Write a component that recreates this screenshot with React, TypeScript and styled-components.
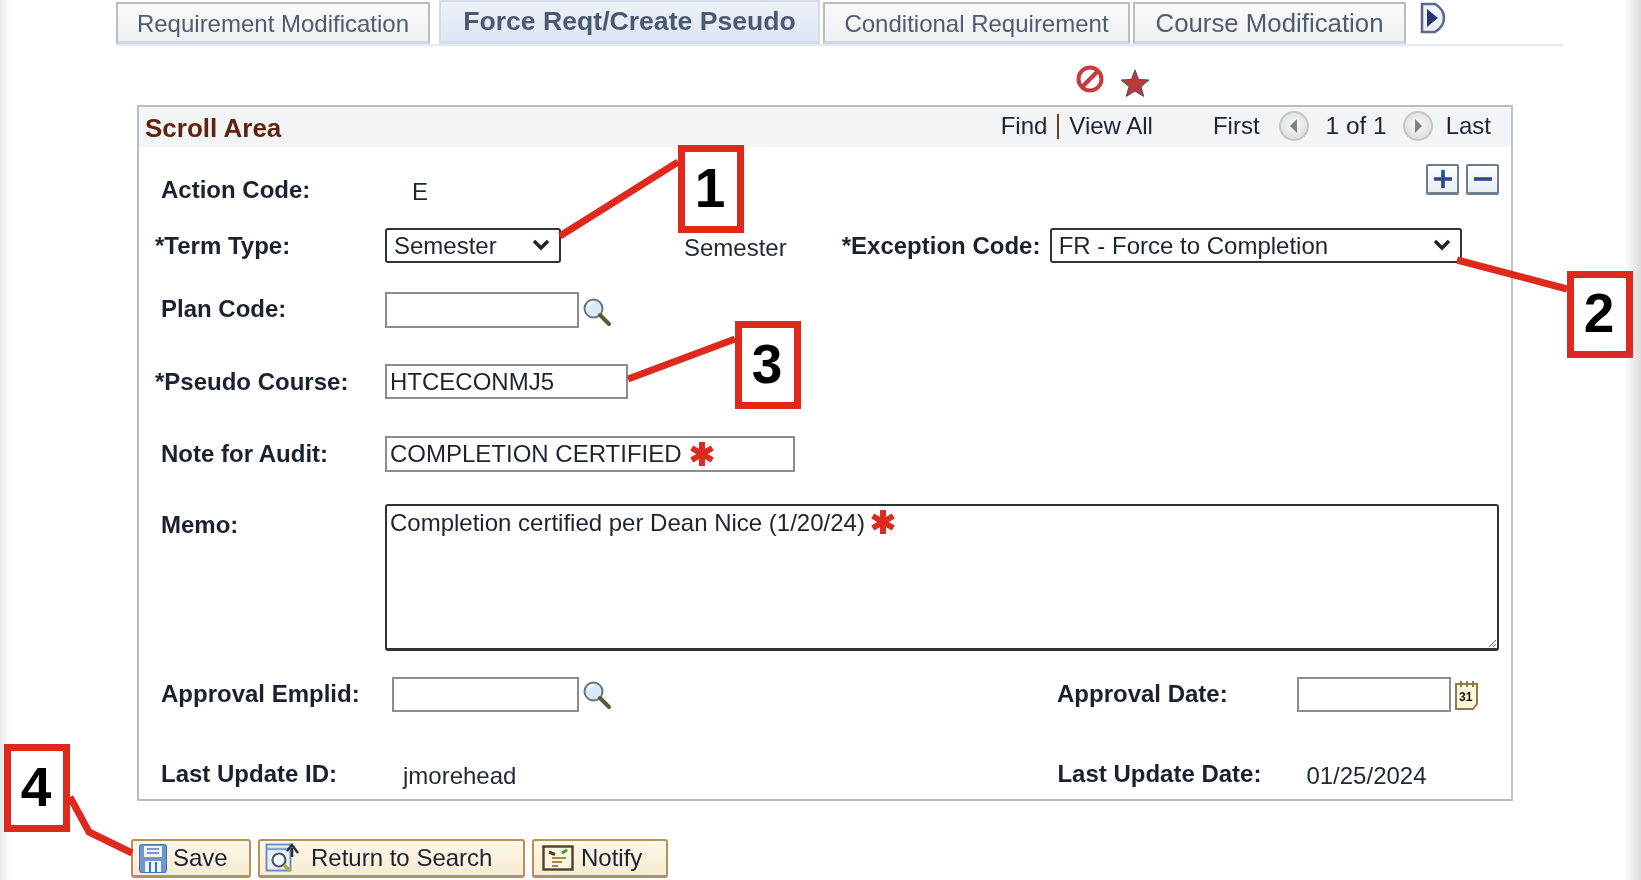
import React from "react";
import styled, { createGlobalStyle } from "styled-components";

const Global = createGlobalStyle`
  html, body { margin: 0; padding: 0; background: #fff; }
  body { font-family: "Liberation Sans", Arial, sans-serif; overflow: hidden; }
  * { box-sizing: border-box; }
`;

const Page = styled.div`
  position: relative;
  width: 1641px;
  height: 880px;
  overflow: hidden;
  padding-left: 137px;
  background: linear-gradient(90deg, #e9e9e9 0, #fff 11px, #fff 1624px, #dcdcdc 1641px);
`;

const Blurred = styled.div`
  filter: blur(0.6px);
`;

const TabBar = styled.div`
  display: flex;
  align-items: flex-start;
  height: 46px;
  width: 1447px;
  margin-left: -21px;
  border-bottom: 2px solid #e4e8f0;
`;

const Tab = styled.div<{ $active?: boolean; $w: number; $mr: number; $fs?: number }>`
  flex: none;
  width: ${(p) => p.$w}px;
  margin-right: ${(p) => p.$mr}px;
  height: ${(p) => (p.$active ? 44 : 42)}px;
  margin-top: ${(p) => (p.$active ? 0 : 2)}px;
  display: flex;
  align-items: center;
  justify-content: center;
  padding: ${(p) => (p.$active ? "0 0 1px" : "2px 0 0")};
  font-size: ${(p) => p.$fs ?? 24}px;
  font-weight: ${(p) => (p.$active ? 700 : 400)};
  color: ${(p) => (p.$active ? "#4b5a70" : "#4f5c6c")};
  border: 2px solid #b9bdc4;
  border-bottom: 3px solid #cfd6e4;
  ${(p) => (p.$active ? "border-color:#d3dcea;" : "")}
  background: ${(p) =>
    p.$active
      ? "linear-gradient(180deg,#eef2f8,#dde6f4)"
      : "linear-gradient(180deg,#fafafa,#eef0f3)"};
`;

const TabArrow = styled.div`
  margin: 2px 0 0 12px;
  height: 32px;
`;

const StatusIcons = styled.div`
  display: flex;
  align-items: flex-start;
  gap: 15px;
  height: 59px;
  padding: 18px 0 0 938px;
`;

const StarSlot = styled.span`
  display: flex;
  margin-top: 5px;
`;

const Panel = styled.section`
  width: 1376px;
  height: 696px;
  border: 2px solid #bcbcbc;
  border-right-color: #c4c4c4;
  background: #fff;
`;

const PanelHead = styled.header`
  display: flex;
  align-items: center;
  height: 40px;
  padding: 0 20px 2px 6px;
  background: #f2f5f5;
  font-size: 24px;
  color: #1c2333;
`;

const PanelTitle = styled.h2`
  margin: 4px auto 0 0;
  font-size: 26px;
  font-weight: 700;
  color: #5f2410;
`;

const Sep = styled.span`
  width: 2px;
  height: 25px;
  margin: 0 10px 0 10px;
  background: #7a3a28;
`;

const NavText = styled.span<{ $ml?: number; $fs?: number }>`
  margin-left: ${(p) => p.$ml ?? 0}px;
  font-size: ${(p) => p.$fs ?? 24}px;
`;

const NavBtn = styled.span<{ $ml: number; $mr: number }>`
  display: inline-flex;
  margin: 0 ${(p) => p.$mr}px 0 ${(p) => p.$ml}px;
`;

const Body = styled.div`
  padding-left: 16px;
`;

const Row = styled.div<{ $h: number; $mt: number; $start?: boolean }>`
  display: flex;
  align-items: ${(p) => (p.$start ? "flex-start" : "center")};
  height: ${(p) => p.$h}px;
  margin-top: ${(p) => p.$mt}px;
`;

const Label = styled.label<{ $req?: boolean; $w?: number; $ml?: number; $pt?: number; $pb?: number }>`
  flex: none;
  width: ${(p) => p.$w ?? 230}px;
  margin-left: ${(p) => p.$ml ?? 0}px;
  padding: ${(p) => p.$pt ?? 0}px 0 ${(p) => p.$pb ?? 0}px ${(p) => (p.$req ? 0 : 6)}px;
  font-size: 24px;
  font-weight: 700;
  color: #1a2230;
`;

const Value = styled.span<{ $ml?: number; $pt?: number }>`
  font-size: 24px;
  color: #1f2733;
  margin-left: ${(p) => p.$ml ?? 0}px;
  padding-top: ${(p) => p.$pt ?? 0}px;
`;

const Select = styled.select<{ $w: number }>`
  appearance: none;
  width: ${(p) => p.$w}px;
  height: 35px;
  padding: 0 30px 0 7px;
  font: 24px "Liberation Sans", Arial, sans-serif;
  color: #1c2430;
  background: #fff;
  border: 2px solid #333;
  border-radius: 3px;
`;

const Chevron = styled.svg`
  position: absolute;
  right: 11px;
  top: 10px;
  pointer-events: none;
`;

const Input = styled.input<{ $w: number; $h?: number }>`
  flex: none;
  width: ${(p) => p.$w}px;
  height: ${(p) => p.$h ?? 35}px;
  padding: 0 3px;
  font: 24px "Liberation Sans", Arial, sans-serif;
  color: #1c2430;
  background: #fff;
  border: 2px solid #8d8d8d;
  border-radius: 0;
  outline: none;
`;

const FieldWrap = styled.div`
  position: relative;
  flex: none;
  display: flex;
`;

const Asterisk = styled.span<{ $left: number; $top: number }>`
  position: absolute;
  left: ${(p) => p.$left}px;
  top: ${(p) => p.$top}px;
  display: flex;
`;

const TextArea = styled.textarea`
  width: 1114px;
  height: 147px;
  padding: 3px 3px;
  font: 24px/28px "Liberation Sans", Arial, sans-serif;
  color: #1c2430;
  background: #fff;
  border: 2px solid #333;
  border-bottom-width: 3px;
  border-radius: 3px;
  outline: none;
`;

const LookupIcon = styled.span<{ $mt?: number }>`
  display: inline-flex;
  margin: ${(p) => p.$mt ?? 4}px 0 0 3px;
`;

const RowButtons = styled.div`
  display: flex;
  gap: 7px;
  margin-left: auto;
  margin-right: 12px;
  align-self: flex-start;
`;

const SquareBtn = styled.span`
  display: flex;
  align-items: center;
  justify-content: center;
  width: 33px;
  height: 31px;
  background: linear-gradient(180deg, #fdfeff, #e7edf3);
  border: 2px solid #6e7f8b;
  border-bottom-width: 3px;
  border-radius: 2px;
`;

const Footer = styled.footer`
  display: flex;
  gap: 7px;
  margin: 38px 0 0 -6px;
`;

const ActionBtn = styled.button<{ $w: number; $pl: number; $gap: number }>`
  display: flex;
  align-items: center;
  gap: ${(p) => p.$gap}px;
  width: ${(p) => p.$w}px;
  height: 39px;
  padding: 0 0 0 ${(p) => p.$pl}px;
  font: 24px "Liberation Sans", Arial, sans-serif;
  color: #1a2230;
  background: linear-gradient(180deg, #fdf7ea, #f8ebd2);
  border: 2px solid #b59257;
  border-bottom-width: 3px;
  border-radius: 3px;
`;

const Overlay = styled.svg`
  position: absolute;
  inset: 0;
  width: 1641px;
  height: 880px;
  pointer-events: none;
`;

const Callout = styled.div<{ $x: number; $y: number; $w: number; $h: number }>`
  position: absolute;
  left: ${(p) => p.$x}px;
  top: ${(p) => p.$y}px;
  width: ${(p) => p.$w}px;
  height: ${(p) => p.$h}px;
  display: flex;
  align-items: center;
  justify-content: center;
  padding: 0 2px 3px 0;
  background: #fff;
  border: 7px solid #e0291d;
  font-size: 55px;
  font-weight: 700;
  color: #000;
  filter: blur(0.4px);
`;

const Magnifier = () => (
  <svg width="30" height="30" viewBox="0 0 30 30">
    <circle cx="11.5" cy="11.5" r="9" fill="#dbe9f6" stroke="#69747c" strokeWidth="2" />
    <path d="M6.5 10a5.5 5.5 0 0 1 5-4.5" fill="none" stroke="#fff" strokeWidth="2" />
    <path d="M18 18l9 9" stroke="#5c5a3a" strokeWidth="4" strokeLinecap="round" />
  </svg>
);

const CalendarIcon = () => (
  <svg width="26" height="30" viewBox="0 0 26 30">
    <path d="M2 4h21v20l-4 5H2z" fill="#fbf6dc" stroke="#8e7a45" strokeWidth="2" />
    <path d="M7 1v6M13 1v6M19 1v6" stroke="#8e7a45" strokeWidth="2" />
    <text x="5" y="21" fontFamily="Liberation Sans" fontWeight="700" fontSize="12" fill="#111">31</text>
  </svg>
);

const RoundNav = ({ dir }: { dir: "l" | "r" }) => (
  <svg width="32" height="32" viewBox="0 0 32 32">
    <defs>
      <radialGradient id={`nav${dir}`} cx="50%" cy="45%" r="60%">
        <stop offset="0" stopColor="#fdfdfd" />
        <stop offset="1" stopColor="#d8d8d8" />
      </radialGradient>
    </defs>
    <circle cx="16" cy="16" r="14" fill={`url(#nav${dir})`} stroke="#c6c6c6" strokeWidth="2" />
    <path d={dir === "l" ? "M19 9l-7 7 7 7z" : "M13 9l7 7-7 7z"} fill="#7d8285" />
  </svg>
);

const RedStar = () => (
  <svg width="26" height="26" viewBox="0 0 24 24">
    <path d="M12 1v22M2.5 6.5l19 11M21.5 6.5l-19 11" stroke="#dd2a20" strokeWidth="5.5" />
  </svg>
);

const ChevronIcon = () => (
  <Chevron width="18" height="13" viewBox="0 0 18 13">
    <path d="M2 3l7 7 7-7" fill="none" stroke="#222" strokeWidth="3.4" />
  </Chevron>
);

const SaveIcon = () => (
  <svg width="30" height="31" viewBox="0 0 30 31">
    <rect x="1.5" y="1.5" width="27" height="28" rx="2" fill="#6f96cf" stroke="#4a6fb0" />
    <rect x="6" y="3" width="18" height="11" fill="#eef4fb" />
    <path d="M9 6h12M9 10h12" stroke="#5279b8" strokeWidth="1.6" />
    <rect x="7" y="18" width="16" height="11" fill="#eef4fb" />
    <path d="M12 19v10M18 19v10" stroke="#4a6fb0" strokeWidth="2" />
  </svg>
);

const ReturnIcon = () => (
  <svg width="36" height="32" viewBox="0 0 36 32">
    <rect x="1.5" y="2.5" width="24" height="26" fill="#eaf0f8" stroke="#6f8fc4" strokeWidth="2" />
    <path d="M2 7h23" stroke="#8aa5d0" strokeWidth="2.5" />
    <circle cx="14" cy="18" r="6.5" fill="#f4f7fa" stroke="#4a5a68" strokeWidth="2.2" />
    <path d="M19 23l6 6" stroke="#b9a93f" strokeWidth="3.5" />
    <path d="M27 15V6" stroke="#26333f" strokeWidth="2.6" />
    <path d="M22 9l5-6 6 8" fill="none" stroke="#26333f" strokeWidth="2.4" />
  </svg>
);

const NotifyIcon = () => (
  <svg width="32" height="26" viewBox="0 0 32 26">
    <rect x="1.5" y="1.5" width="29" height="23" fill="#fbf4df" stroke="#4f3e28" strokeWidth="2.4" />
    <path d="M7 7l6 2.5" stroke="#4f3e28" strokeWidth="3" />
    <path d="M20 8l5-3" stroke="#3f9a3a" strokeWidth="3" />
    <path d="M10 13h14M10 17h10M10 21h6" stroke="#a58a3f" strokeWidth="2" />
  </svg>
);

export default function App() {
  return (
    <Page>
      <Global />
      <Blurred>
        <TabBar>
          <Tab $w={314} $mr={9}>Requirement Modification</Tab>
          <Tab $active $fs={26.6} $w={381} $mr={3}>Force Reqt/Create Pseudo</Tab>
          <Tab $w={307} $mr={3}>Conditional Requirement</Tab>
          <Tab $fs={25.8} $w={273} $mr={0}>Course Modification</Tab>
          <TabArrow>
            <svg width="30" height="32" viewBox="0 0 28 32">
              <path d="M3 2h13c5 3 9 8 9 14s-4 11-9 14H3z" fill="#eef2fa" stroke="#5d6a85" strokeWidth="2.6" />
              <path d="M8 7l11 9-11 9z" fill="#28356f" />
            </svg>
          </TabArrow>
        </TabBar>
        <StatusIcons>
          <svg width="30" height="30" viewBox="0 0 30 30">
            <circle cx="15" cy="15" r="11.5" fill="#fff" stroke="#c93a3f" strokeWidth="4" />
            <path d="M8 22L22 8" stroke="#c93a3f" strokeWidth="4.5" />
          </svg>
          <StarSlot>
            <svg width="30" height="28" viewBox="0 0 30 28">
              <path d="M15 1l3.6 9.4 10.4.6-8 6.6 2.7 9.8L15 22l-8.7 5.4 2.7-9.8-8-6.6 10.4-.6z" fill="#b93b3b" stroke="#4d4d4d" strokeWidth="1" />
            </svg>
          </StarSlot>
        </StatusIcons>
        <Panel>
          <PanelHead>
            <PanelTitle>Scroll Area</PanelTitle>
            <NavText>Find</NavText>
            <Sep />
            <NavText>View All</NavText>
            <NavText $ml={60}>First</NavText>
            <NavBtn $ml={18} $mr={16}><RoundNav dir="l" /></NavBtn>
            <NavText $fs={24.4}>1 of 1</NavText>
            <NavBtn $ml={15} $mr={12}><RoundNav dir="r" /></NavBtn>
            <NavText>Last</NavText>
          </PanelHead>
          <Body>
            <Row $h={52} $mt={17}>
              <Label>Action Code:</Label>
              <Value $ml={27} $pt={4}>E</Value>
              <RowButtons>
                <SquareBtn>
                  <svg width="20" height="20" viewBox="0 0 20 20"><path d="M10 1v18M1 10h18" stroke="#274b8e" strokeWidth="3.6" /></svg>
                </SquareBtn>
                <SquareBtn>
                  <svg width="20" height="20" viewBox="0 0 20 20"><path d="M1 10h18" stroke="#274b8e" strokeWidth="3.6" /></svg>
                </SquareBtn>
              </RowButtons>
            </Row>
            <Row $h={35} $mt={12}>
              <Label $req>*Term Type:</Label>
              <FieldWrap>
                <Select $w={176} defaultValue="Semester"><option>Semester</option></Select>
                <ChevronIcon />
              </FieldWrap>
              <Value $ml={123} $pt={4}>Semester</Value>
              <Label $req $w={208} $ml={55}>*Exception Code:</Label>
              <FieldWrap>
                <Select $w={412} defaultValue="FR"><option value="FR">FR - Force to Completion</option></Select>
                <ChevronIcon />
              </FieldWrap>
            </Row>
            <Row $h={36} $mt={29}>
              <Label $pb={2}>Plan Code:</Label>
              <Input $w={194} $h={36} readOnly />
              <LookupIcon><Magnifier /></LookupIcon>
            </Row>
            <Row $h={35} $mt={36}>
              <Label $req>*Pseudo Course:</Label>
              <Input $w={243} readOnly defaultValue="HTCECONMJ5" />
            </Row>
            <Row $h={36} $mt={37}>
              <Label>Note for Audit:</Label>
              <FieldWrap>
                <Input $w={410} $h={36} readOnly defaultValue="COMPLETION CERTIFIED" />
                <Asterisk $left={304} $top={5}><RedStar /></Asterisk>
              </FieldWrap>
            </Row>
            <Row $h={147} $mt={32} $start>
              <Label $pt={7}>Memo:</Label>
              <FieldWrap>
                <TextArea readOnly defaultValue="Completion certified per Dean Nice (1/20/24)" />
                <Asterisk $left={485} $top={5}><RedStar /></Asterisk>
              </FieldWrap>
            </Row>
            <Row $h={35} $mt={26}>
              <Label $w={237} $pb={2}>Approval Emplid:</Label>
              <Input $w={187} readOnly />
              <LookupIcon $mt={1}><Magnifier /></LookupIcon>
              <Label $w={246} $ml={439} $pb={2}>Approval Date:</Label>
              <Input $w={154} readOnly />
              <LookupIcon $mt={0}><CalendarIcon /></LookupIcon>
            </Row>
            <Row $h={36} $mt={44}>
              <Label>Last Update ID:</Label>
              <Value $ml={18} $pt={4}>jmorehead</Value>
              <Label $w={255} $ml={535}>Last Update Date:</Label>
              <Value $pt={4}>01/25/2024</Value>
            </Row>
          </Body>
        </Panel>
        <Footer>
          <ActionBtn $w={120} $pl={5} $gap={5}><SaveIcon />Save</ActionBtn>
          <ActionBtn $w={267} $pl={5} $gap={10}><ReturnIcon />Return to Search</ActionBtn>
          <ActionBtn $w={136} $pl={8} $gap={7}><NotifyIcon />Notify</ActionBtn>
        </Footer>
      </Blurred>
      <Overlay viewBox="0 0 1641 880">
        <g fill="none" stroke="#e0291d" strokeWidth="7">
          <path d="M560 236L678 162" />
          <path d="M1457 260L1567 289" />
          <path d="M628 379L735 339" />
          <path d="M70 797L89 832L132 853" />
        </g>
      </Overlay>
      <Callout $x={678} $y={145} $w={66} $h={88}>1</Callout>
      <Callout $x={1567} $y={271} $w={66} $h={87}>2</Callout>
      <Callout $x={735} $y={321} $w={66} $h={88}>3</Callout>
      <Callout $x={4} $y={744} $w={66} $h={88}>4</Callout>
    </Page>
  );
}
